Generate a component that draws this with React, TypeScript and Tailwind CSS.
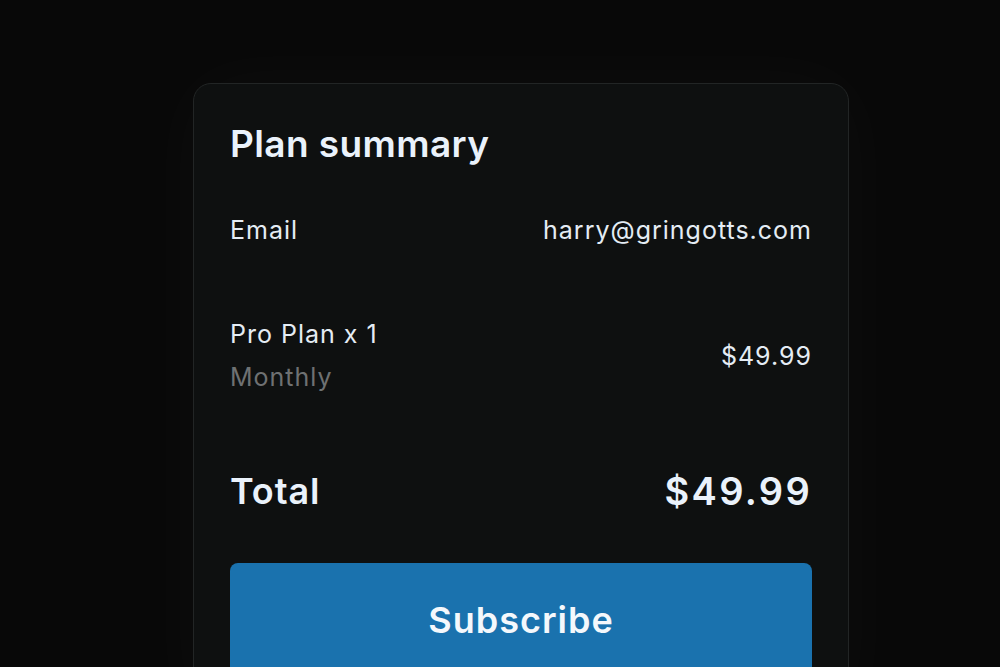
const font = { fontFamily: 'Inter, "Noto Sans", sans-serif' };

function Row({ label, value }: { label: string; value: string }) {
  return (
    <div className="flex items-center justify-between text-[25px] leading-[32px] tracking-[1px] text-[#e4ecf4]">
      <span>{label}</span>
      <span>{value}</span>
    </div>
  );
}

export default function App() {
  return (
    <div className="h-[667px] w-full overflow-hidden bg-[#080808]" style={font}>
      <div className="pl-[193px] pt-[83px]">
        <div className="w-[656px] rounded-[18px] border border-[#222525] bg-[#0e1010] px-[36px] pb-[40px] pt-[38px] shadow-[0_0_80px_rgba(255,255,255,0.03)]">
          <h2 className="text-[37px] font-semibold leading-[43px] tracking-[0.4px] text-[#eaf2fb]">Plan summary</h2>

          <div className="mt-[49px]">
            <Row label="Email" value="harry@gringotts.com" />
          </div>

          <div className="mt-[67px] flex items-center justify-between text-[25px] leading-[43px] tracking-[1px]">
            <div>
              <div className="text-[#e4ecf4]">Pro Plan x 1</div>
              <div className="text-[#6e7172]">Monthly</div>
            </div>
            <span className="text-[#e4ecf4]">$49.99</span>
          </div>

          <div className="mt-[71px] flex items-center justify-between font-semibold leading-[43px] text-[#eaf2fb]">
            <span className="text-[36px] tracking-[0.9px]">Total</span>
            <span className="text-[38px] tracking-[2.3px]">$49.99</span>
          </div>

          <button className="mt-[50px] w-full rounded-[8px] bg-[#1a72ae] py-[36px] text-[36px] font-semibold leading-[43px] tracking-[1px] text-[#f4f8fc]">
            Subscribe
          </button>
        </div>
      </div>
    </div>
  );
}
